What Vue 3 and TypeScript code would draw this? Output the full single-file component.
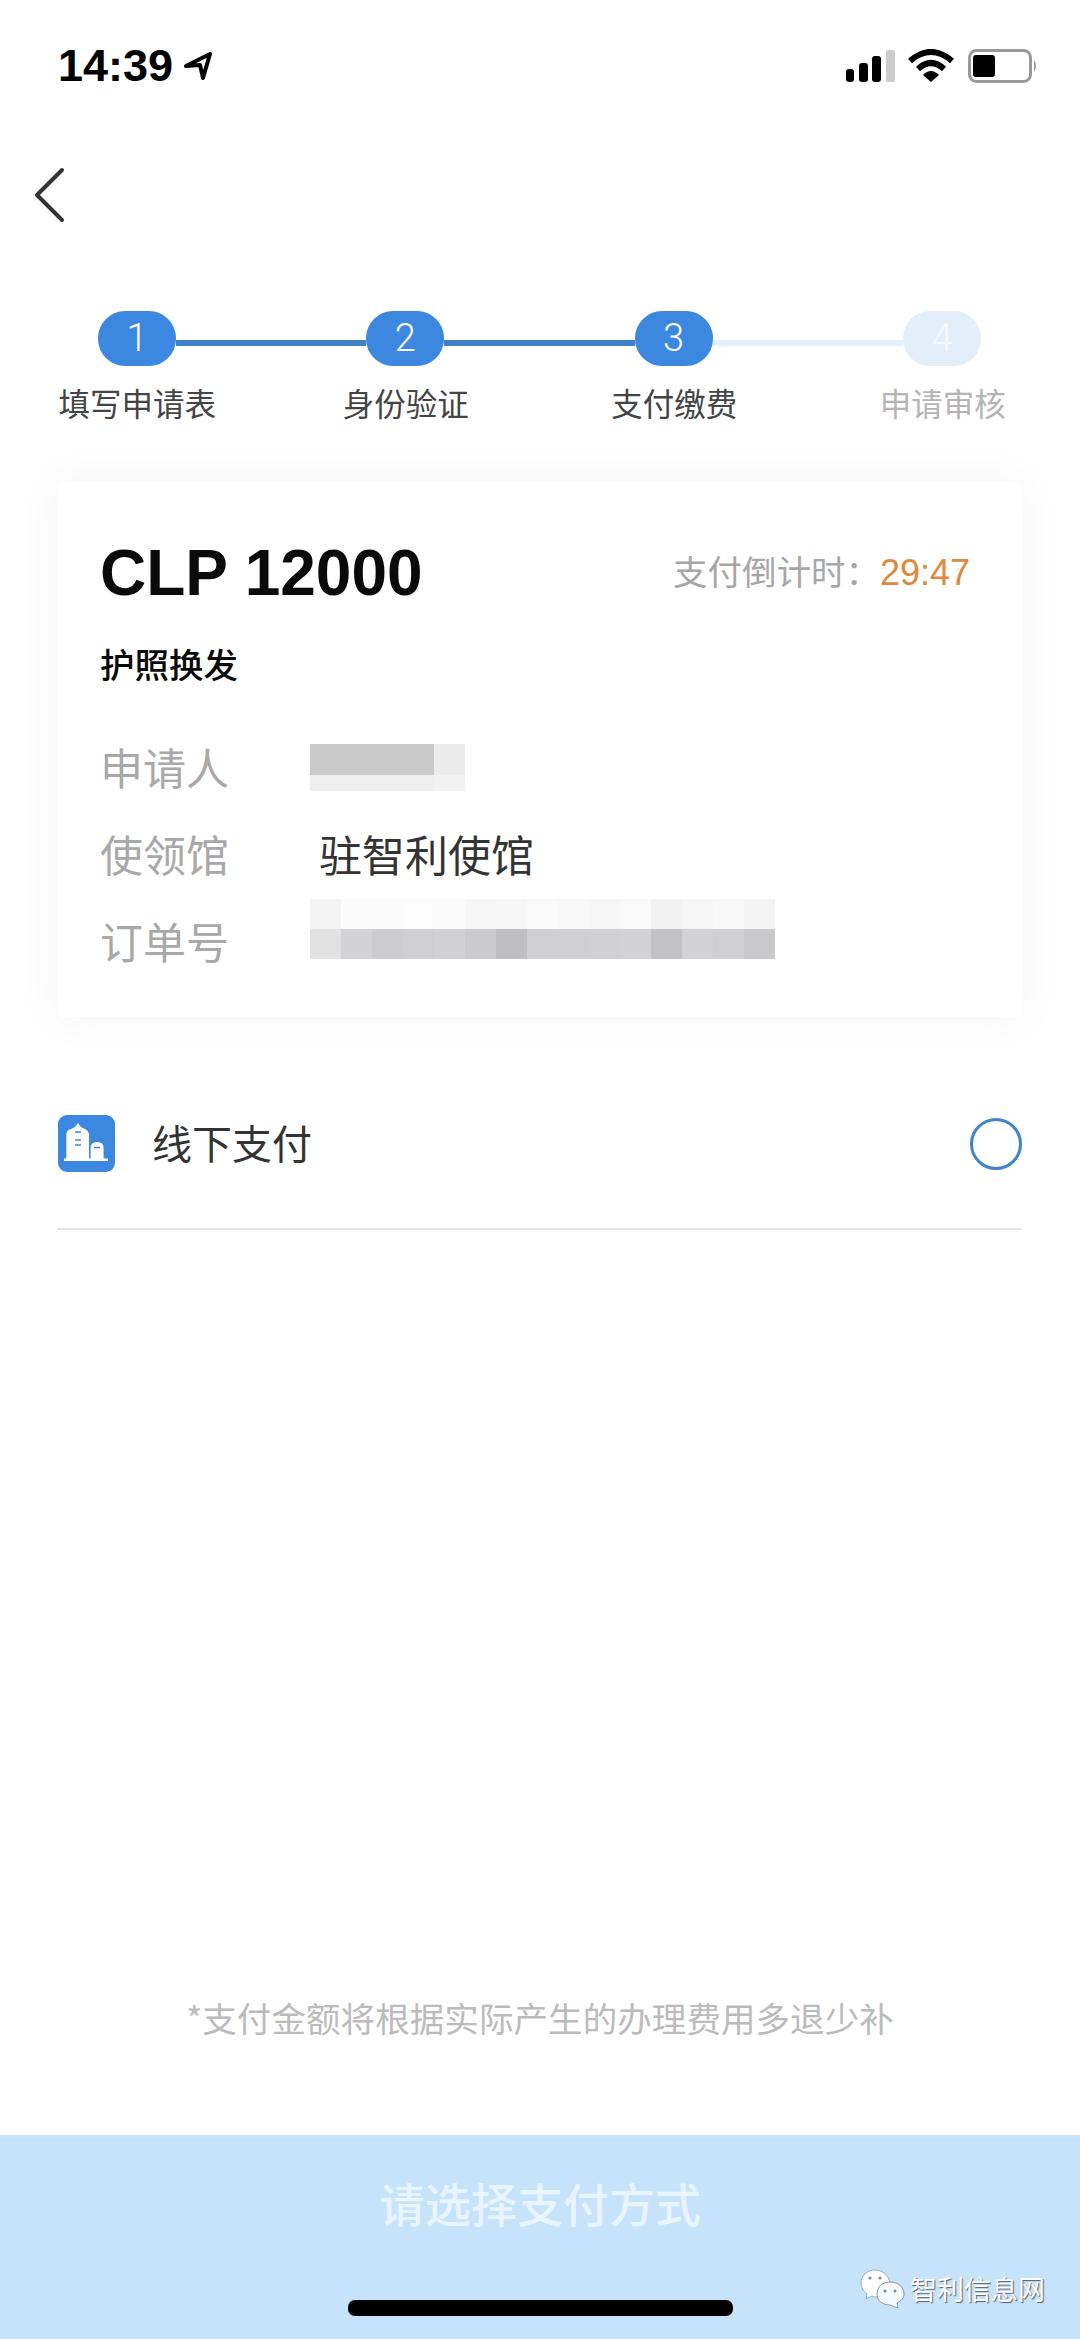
<template>
  <div class="page">
    <div class="status-bar">
      <div class="clock">
        <span class="time">14:39</span>
        <svg class="arrow" width="30" height="30" viewBox="0 0 30 30">
          <path d="M3 15 L27 3 L20 27 L17 14 Z" fill="none" stroke="#000" stroke-width="4" stroke-linejoin="round" />
        </svg>
      </div>
      <svg class="status-icons" width="193" height="34" viewBox="0 0 193 34">
        <rect x="0" y="20" width="8" height="13" rx="3" fill="#000" />
        <rect x="13" y="14" width="9" height="19" rx="3" fill="#000" />
        <rect x="26" y="7" width="9" height="26" rx="3" fill="#000" />
        <rect x="40" y="1" width="9" height="32" rx="2" fill="#ccc" />
        <path d="M64 12 Q85 -6 106 12" fill="none" stroke="#000" stroke-width="6" />
        <path d="M72 20 Q85 8 98 20" fill="none" stroke="#000" stroke-width="6" />
        <path d="M77 26 Q85 18 93 26 L85 33 Z" fill="#000" />
        <rect x="123.5" y="1.5" width="61" height="31" rx="7" fill="#fff" stroke="#999" stroke-width="3" />
        <rect x="127" y="6" width="22" height="22" rx="3" fill="#000" />
        <path d="M188 11 Q192 17 188 23 Z" fill="#999" />
      </svg>
    </div>

    <div class="nav">
      <svg width="32" height="56" viewBox="0 0 32 56">
        <path d="M29 3 L4 28 L29 53" fill="none" stroke="#333" stroke-width="4" stroke-linecap="round" stroke-linejoin="round" />
      </svg>
    </div>

    <div class="steps">
      <div class="track">
        <template v-for="(step, i) in steps" :key="step.label">
          <div class="dot" :class="{ off: !step.done }">{{ i + 1 }}</div>
          <div v-if="i < steps.length - 1" class="line" :class="{ off: !steps[i + 1].done }"></div>
        </template>
      </div>
      <div class="labels">
        <div v-for="step in steps" :key="step.label" class="label" :class="{ off: !step.done }">{{ step.label }}</div>
      </div>
    </div>

    <div class="card">
      <div class="card-top">
        <div class="amount">CLP 12000</div>
        <div class="countdown">支付倒计时：<span class="remain">29:47</span></div>
      </div>
      <div class="service">护照换发</div>
      <div class="info-row">
        <div class="info-label">申请人</div>
        <div class="mosaic name">
          <div v-for="(c, i) in nameCells" :key="i" :style="{ background: c }"></div>
        </div>
      </div>
      <div class="info-row">
        <div class="info-label">使领馆</div>
        <div class="info-value">驻智利使馆</div>
      </div>
      <div class="info-row">
        <div class="info-label">订单号</div>
        <div class="mosaic order">
          <div v-for="(c, i) in orderCells" :key="i" :style="{ background: c }"></div>
        </div>
      </div>
    </div>

    <div class="pay-row">
      <svg class="pay-icon" width="57" height="57" viewBox="0 0 57 57">
        <rect width="57" height="57" rx="9" fill="#3c87e0" />
        <path d="M8.3 44 V20 Q8.3 15 13 14 L17 12 L20 8 L23 12 L27 14 Q31 16 31 20 V44 Z" fill="#fff" />
        <path d="M32.6 44 V33 Q32.6 27 39 27 Q45.6 27 45.6 33 V44 Z" fill="#fff" />
        <rect x="6" y="43.5" width="44" height="2.5" fill="#fff" />
        <path d="M17 17 H23 M17 25 H23 M17 30 H23 M36 32.5 H42" stroke="#3c87e0" stroke-width="1.5" />
      </svg>
      <div class="pay-name">线下支付</div>
      <div class="radio"></div>
    </div>

    <div class="spacer"></div>

    <div class="note">*支付金额将根据实际产生的办理费用多退少补</div>

    <div class="submit">
      <div class="submit-text">请选择支付方式</div>
      <div class="home-bar"></div>
    </div>

    <div class="watermark">
      <svg width="45" height="40" viewBox="0 0 45 40">
        <path d="M15 1 C7 1 1 7 1 14 C1 19 4 22 7 25 L6 30 L12 27 C14 28 16 28 18 28 L30 14 C29 7 23 1 15 1 Z" fill="#fff" stroke="#8a9aa8" stroke-width="0.8" />
        <path d="M30 13 C22 13 17 18 17 25 C17 32 23 36 30 36 L38 39 L37 34 C41 32 44 29 44 25 C44 18 38 13 30 13 Z" fill="#f4f9fd" stroke="#6d7f8e" stroke-width="0.8" />
        <circle cx="10" cy="9" r="1.6" fill="#7b8a96" />
        <circle cx="20" cy="9" r="1.6" fill="#7b8a96" />
        <circle cx="25" cy="22" r="1.5" fill="#7b8a96" />
        <circle cx="35" cy="22" r="1.5" fill="#7b8a96" />
      </svg>
      <span class="mark-text">智利信息网</span>
    </div>
  </div>
</template>

<script setup lang="ts">
const steps = [
  { label: '填写申请表', done: true },
  { label: '身份验证', done: true },
  { label: '支付缴费', done: true },
  { label: '申请审核', done: false }
]

const nameCells = ['#c9c9c9', '#ebebeb', '#efefef', '#f2f2f2']

const orderCells = [
  '#f3f3f3', '#fbfbfb', '#fbfbfb', '#fcfcfc', '#fbfbfb', '#f6f6f6', '#f7f7f7', '#fafafa',
  '#f8f8f8', '#f6f6f6', '#f9f9f9', '#f2f2f2', '#f6f6f6', '#f8f8f8', '#f3f3f3',
  '#e2e2e2', '#d3d3d5', '#cdcdd0', '#cfcfd1', '#d1d1d3', '#cbcbce', '#bfbfc3', '#cfcfd1',
  '#d0d0d2', '#d1d1d3', '#d2d2d4', '#c2c2c5', '#d2d2d4', '#d0d0d2', '#c9c9cc'
]
</script>

<style>
html,
body {
  margin: 0;
  background: #fff;
}
</style>

<style scoped>
.page {
  position: relative;
  width: 1080px;
  height: 2339px;
  display: flex;
  flex-direction: column;
  background: #fff;
  font-family: "Noto Sans CJK SC", "Liberation Sans", sans-serif;
  overflow: hidden;
}

.status-bar {
  height: 132px;
  padding: 0 41px 0 58px;
  display: flex;
  align-items: center;
  justify-content: space-between;
  box-sizing: border-box;
}

.clock {
  display: flex;
  align-items: center;
  gap: 10px;
}

.time {
  font-family: "Liberation Sans", sans-serif;
  font-weight: 700;
  font-size: 45px;
  line-height: 50px;
  color: #000;
}

.nav {
  height: 126px;
  padding-left: 33px;
  display: flex;
  align-items: center;
}

.steps {
  padding-top: 53px;
}

.track {
  display: flex;
  align-items: center;
  padding: 0 99px 0 98px;
}

.dot {
  width: 78px;
  height: 55px;
  flex: none;
  border-radius: 27px;
  background: #3c87e0;
  color: #fff;
  font-family: Roboto, sans-serif;
  font-weight: 300;
  font-size: 38px;
  line-height: 55px;
  text-align: center;
}

.dot.off {
  background: #e2eefa;
  color: #f4f9fe;
}

.line {
  flex: 1;
  height: 6px;
  margin-top: 8px;
  background: #3f80c9;
}

.line.off {
  background: #e3f0fc;
}

.labels {
  display: grid;
  grid-template-columns: repeat(4, 268.5px);
  padding-left: 3px;
  margin-top: 16px;
}

.label {
  font-size: 31.5px;
  line-height: 40px;
  text-align: center;
  color: #444;
}

.label.off {
  color: #b4b4b4;
}

.card {
  margin: 60px 58px 0 57px;
  height: 535px;
  box-sizing: border-box;
  padding: 59px 52px 0 43px;
  background: #fff;
  border-radius: 6px;
  box-shadow: 0 0 40px 6px rgba(0, 0, 0, 0.035);
}

.card-top {
  height: 64px;
  display: flex;
  align-items: center;
  justify-content: space-between;
}

.amount {
  font-family: "Liberation Sans", sans-serif;
  font-weight: 700;
  font-size: 64px;
  line-height: 64px;
  color: #0a0a0a;
}

.countdown {
  margin-bottom: 3px;
  font-size: 34.5px;
  line-height: 44px;
  color: #a6a6a6;
}

.remain {
  font-family: "Liberation Sans", sans-serif;
  font-size: 36px;
  color: #e0883c;
}

.service {
  margin-top: 36px;
  font-size: 34.5px;
  line-height: 44px;
  font-weight: 500;
  color: #0a0a0a;
}

.info-row {
  height: 87px;
  display: flex;
  align-items: center;
}

.service + .info-row {
  margin-top: 39px;
}

.info-label {
  width: 210px;
  flex: none;
  margin-bottom: 3px;
  font-size: 43px;
  line-height: 50px;
  color: #a8a8a8;
}

.info-value {
  padding-left: 9px;
  margin-bottom: 3px;
  font-size: 43px;
  line-height: 50px;
  color: #333;
}

.mosaic {
  display: grid;
}

.mosaic.name {
  grid-template-columns: 124px 31px;
  grid-template-rows: 31px 16px;
}

.mosaic.order {
  grid-template-columns: repeat(15, 31px);
  grid-template-rows: 30px 30px;
  margin-bottom: 26px;
}

.pay-row {
  height: 171px;
  margin: 42px 58px 0 57px;
  display: flex;
  align-items: center;
  border-bottom: 2px solid #e6e6e6;
  box-sizing: border-box;
}

.pay-icon {
  margin-left: 1px;
  flex: none;
}

.pay-name {
  margin-left: 37px;
  margin-bottom: 4px;
  font-size: 40px;
  line-height: 50px;
  color: #333;
}

.radio {
  width: 52px;
  height: 52px;
  margin-left: auto;
  box-sizing: border-box;
  border: 3px solid #3f84cc;
  border-radius: 50%;
}

.spacer {
  flex: 1;
}

.note {
  margin-bottom: 93px;
  font-size: 34.6px;
  line-height: 50px;
  text-align: center;
  color: #bbb;
}

.submit {
  height: 204px;
  box-sizing: border-box;
  padding-top: 42px;
  display: flex;
  flex-direction: column;
  align-items: center;
  background: #c7e3fb;
}

.submit-text {
  font-size: 46px;
  line-height: 50px;
  font-weight: 500;
  color: #e9f5fe;
}

.home-bar {
  width: 385px;
  height: 16px;
  margin-top: 73px;
  border-radius: 7px;
  background: #000;
}

.watermark {
  position: absolute;
  left: 860px;
  top: 2269px;
  display: flex;
  align-items: center;
  gap: 5px;
}

.mark-text {
  font-size: 27px;
  line-height: 36px;
  color: #fff;
  text-shadow: 1px 1px 1px #55606c;
}
</style>
